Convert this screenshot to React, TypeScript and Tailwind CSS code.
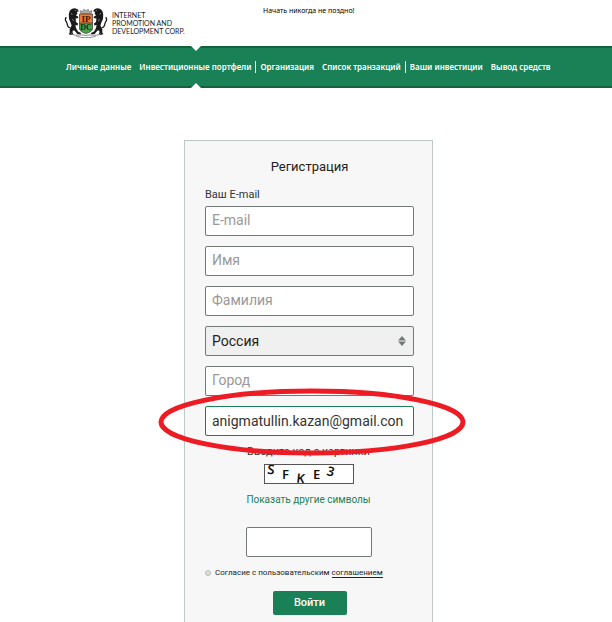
import { useState } from "react";

type NavItem = { label: string; divided?: boolean };

const NAV_ITEMS: NavItem[] = [
  { label: "Личные данные" },
  { label: "Инвестиционные портфели" },
  { label: "Организация", divided: true },
  { label: "Список транзакций" },
  { label: "Ваши инвестиции", divided: true },
  { label: "Вывод средств" },
];

const fieldClass =
  "block w-full h-[30px] rounded-xs border border-[#747876] bg-white px-1.5 pb-0.5 text-[14px] text-[#333] placeholder:text-[#999] outline-none";

// One heraldic lion, facing right; mirrored for the other side
function Lion() {
  return (
    <g>
      <path d="M8 1.8 11 1.2 13.6 2.2 14.8 4.2 12.8 5 13.4 6.6 12 8.4 14 9.6 14.4 11 11.6 11.6 12 15 14 16.6 13.6 18.4 11.4 18 12 21 14 24.6 17 26 16.6 27.4 13.4 27 10.4 23.6 9 23.4 8.4 25 9.4 27.4 7.6 28 4.6 27.2 5.8 25.4 5.6 22.4 7.6 18.6 6.6 15.6 5 12 4.8 7 5.8 3.8Z" fill="#1a1a1a" />
      <path d="M6.4 20.6C2.4 21 4 16.8 2.4 14.8 1 13.4 1 11.4 2.4 10.4" fill="none" stroke="#1a1a1a" strokeWidth="1.3" />
      <path d="M11 3.4h1.4M8.4 12l1.4 2.4M7.2 6l1.2 2" fill="none" stroke="#ccc" strokeWidth="0.5" />
    </g>
  );
}

function Crest() {
  return (
    <svg viewBox="0 0 44 31" className="h-[31px] w-11 shrink-0" aria-hidden="true">
      <Lion />
      <g transform="translate(44 0) scale(-1 1)">
        <Lion />
      </g>
      <path d="M17 7 16 3.6 18.6 4.6 19.8 2.2 22 3.8 24.2 2.2 25.4 4.6 28 3.6 27 7Z" fill="#aaa" stroke="#555" strokeWidth="0.5" />
      <path d="M15.5 7H28.5V16H15.5Z" fill="#ed7a35" />
      <path d="M15.5 16H28.5V21C28.5 24 26 25.4 22 26.4 18 25.4 15.5 24 15.5 21Z" fill="#4aa24c" />
      <path d="M15.5 7H28.5V21C28.5 24 26 25.4 22 26.4 18 25.4 15.5 24 15.5 21ZM15.5 16H28.5" fill="none" stroke="#333" strokeWidth="0.7" />
      <text x="22" y="14.6" textAnchor="middle" fontSize="9" fontWeight="700" fontFamily="Liberation Serif, serif" fill="#3b1c0b">IP</text>
      <text x="22" y="23.2" textAnchor="middle" fontSize="8" fontWeight="700" fontFamily="Liberation Serif, serif" fill="#0d2f12">DC</text>
      <path d="M7 26.5C11 29.8 16 27 22 28.4 28 27 33 29.8 37 26.5M12 28.8C17 31.4 27 31.4 32 28.8" fill="none" stroke="#888" strokeWidth="1" />
    </svg>
  );
}

function Header() {
  return (
    <header className="flex h-[46px] items-start pt-[7px] pl-16">
      <a href="#" className="flex items-center gap-1">
        <Crest />
        <span className="w-[100px] font-['Lato',sans-serif] text-[7px] leading-[8px] text-[#222]">
          INTERNET
          <br />
          PROMOTION AND
          <br />
          DEVELOPMENT CORP.
        </span>
      </a>
      <p className="ml-[51px] font-['Noto_Sans',sans-serif] text-[7px] leading-[8px] whitespace-nowrap text-black">
        Начать никогда не поздно!
      </p>
    </header>
  );
}

function Navigation() {
  return (
    <nav className="relative h-[42px] border-y-2 border-[#14633f] bg-[#1a8055] pl-[62px]">
      <ul className="flex h-full items-center">
        {NAV_ITEMS.map((item) => (
          <li
            key={item.label}
            className={`px-1 font-['Noto_Sans',sans-serif] text-[8px] leading-3 font-semibold whitespace-nowrap text-white ${
              item.divided ? "border-l border-white" : ""
            }`}
          >
            <a href="#">{item.label}</a>
          </li>
        ))}
      </ul>
      {/* notches marking the active section */}
      <svg viewBox="0 0 10 5" className="absolute -top-0.5 left-[191px] h-[5px] w-2.5" aria-hidden="true">
        <path d="M0 0H10L5 5Z" fill="#fff" />
      </svg>
      <svg viewBox="0 0 10 5" className="absolute -bottom-0.5 left-[191px] h-[5px] w-2.5" aria-hidden="true">
        <path d="M0 5H10L5 0Z" fill="#fff" />
      </svg>
    </nav>
  );
}

function CountrySelect() {
  return (
    <div className="relative">
      <select
        aria-label="Страна"
        className="block h-[30px] w-full appearance-none rounded-xs border border-[#747876] bg-[#f0f0f0] px-1.5 text-[14px] text-[#222] outline-none"
      >
        <option>Россия</option>
      </select>
      <svg viewBox="0 0 8 10" className="pointer-events-none absolute top-2.5 right-2 h-2.5 w-2" aria-hidden="true">
        <path d="M4 0 8 4.4H0ZM4 10 8 5.6H0Z" fill="#747876" />
      </svg>
    </div>
  );
}

function Captcha() {
  return (
    <svg
      viewBox="0 0 88 18"
      className="h-5 w-[90px] border border-[#555] bg-white"
      role="img"
      aria-label="Код с картинки"
      fontFamily="Noto Sans, sans-serif"
      fontSize="13"
      fontWeight="600"
      fill="#111"
    >
      <text x="2" y="9" transform="rotate(5 5 8)">S</text>
      <text x="17" y="14">F</text>
      <text x="31" y="18" transform="rotate(6 35 18)">K</text>
      <text x="48" y="14">E</text>
      <text x="61" y="11" transform="rotate(14 65 11)">3</text>
    </svg>
  );
}

export default function App() {
  const [email, setEmail] = useState("anigmatullin.kazan@gmail.con");

  return (
    <div className="flex min-h-screen flex-col overflow-hidden bg-white font-['Roboto',sans-serif]">
      <Header />
      <Navigation />
      <main className="flex flex-1 justify-center pt-[52px] pl-[5px]">
        <form
          className="flex w-[249px] flex-col border border-b-0 border-[#bccac5] bg-[#f7f7f7] pt-4 pr-[18px] pl-5"
          onSubmit={(e) => e.preventDefault()}
        >
          <h1 className="text-center text-[13px] leading-5 text-[#222]">Регистрация</h1>
          <label htmlFor="email" className="mt-2.5 mb-1 text-[11px] leading-[15px] text-[#333]">
            Ваш E-mail
          </label>
          <div className="flex flex-col gap-2.5">
            <input id="email" type="text" placeholder="E-mail" className={fieldClass} />
            <input type="text" placeholder="Имя" aria-label="Имя" className={fieldClass} />
            <input type="text" placeholder="Фамилия" aria-label="Фамилия" className={fieldClass} />
            <CountrySelect />
            <input type="text" placeholder="Город" aria-label="Город" className={fieldClass} />
            <div className="relative">
              <input
                type="text"
                aria-label="Почта"
                value={email}
                onChange={(e) => setEmail(e.target.value)}
                className="block h-[30px] w-full rounded-xs border border-[#1a8055] bg-white px-1.5 text-[14px] text-[#333] outline-none"
              />
              <svg
                viewBox="0 0 308 68"
                className="pointer-events-none absolute -top-[18px] -left-[47px] h-[68px] w-[308px] max-w-none"
                aria-hidden="true"
              >
                <ellipse cx="154" cy="34" rx="151" ry="31" fill="none" stroke="#ed1c24" strokeWidth="5" />
              </svg>
            </div>
          </div>
          <div className="flex flex-col items-center pr-0.5">
            <label htmlFor="code" className="mt-1.5 mb-0.5 text-[11px] leading-5 text-[#333]">
              Введите код с картинки
            </label>
            <Captcha />
            <button type="button" className="mt-2 text-[10px] leading-4 text-[#1a8055]">
              Показать другие символы
            </button>
            <input
              id="code"
              type="text"
              className="mt-[19px] h-[30px] w-[126px] rounded-xs border border-[#747876] bg-white px-1.5 text-[14px] outline-none"
            />
          </div>
          <div className="mt-2.5 flex items-center gap-1 text-[8px] leading-3 text-[#222]">
            <input
              id="agree"
              type="radio"
              className="size-1.5 appearance-none rounded-full border border-[#bbb] bg-[#ddd] checked:bg-[#555]"
            />
            <label htmlFor="agree" className="whitespace-nowrap">
              Согласие с пользовательским{" "}
              <a href="#" className="border-b border-[#222]">
                соглашением
              </a>
            </label>
          </div>
          <button
            type="submit"
            className="mt-3 mb-[7px] h-6 w-[74px] self-center rounded-xs bg-[#1a8055] text-[11px] font-medium text-white"
          >
            Войти
          </button>
        </form>
      </main>
    </div>
  );
}
